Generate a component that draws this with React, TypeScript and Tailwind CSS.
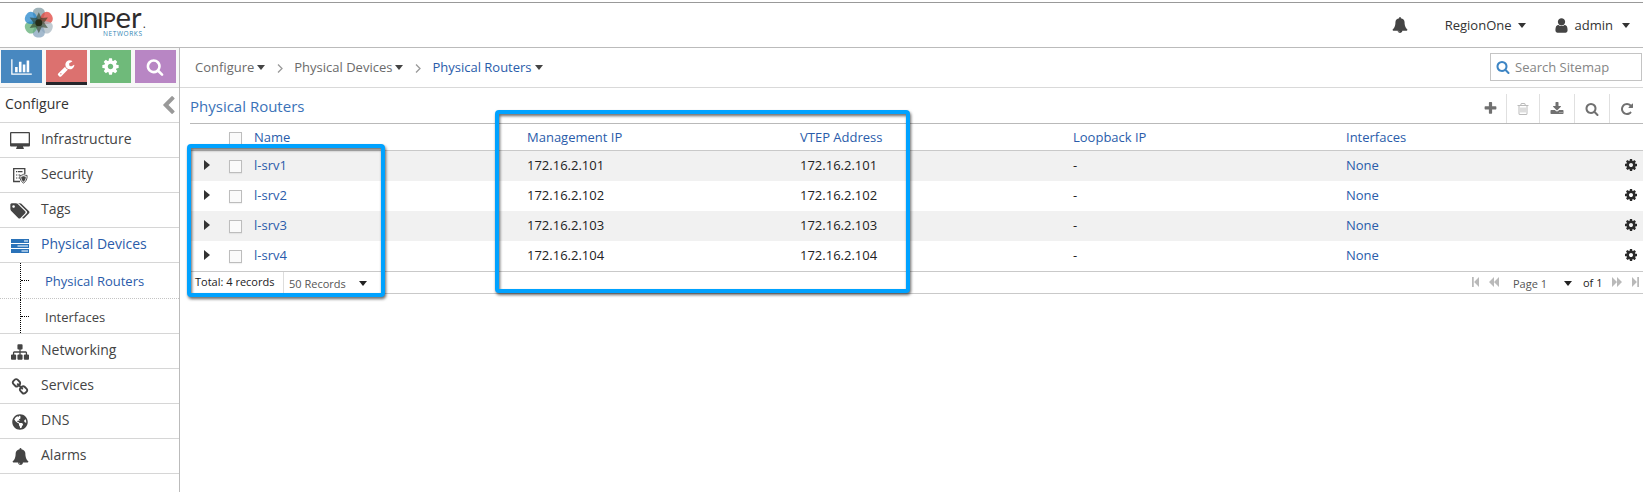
import React from "react";
import { FaGlobeAmericas } from "react-icons/fa";

const paths = {
  cog: "M1152 896q0-106-75-181t-181-75-181 75-75 181 75 181 181 75 181-75 75-181zm512-109v222q0 12-8 23t-20 13l-185 28q-19 54-39 91 35 50 107 138 10 12 10 25t-9 23q-27 37-99 108t-94 71q-12 0-26-9l-138-108q-44 23-91 38-16 136-29 186-7 28-36 28h-222q-14 0-24.5-8.5t-11.5-21.5l-28-184q-49-16-90-37l-141 107q-10 9-25 9-14 0-25-11-126-114-165-168-7-10-7-23 0-12 8-23 15-21 51-66.5t54-70.5q-27-50-41-99l-183-27q-13-2-21-12.5t-8-23.5v-222q0-12 8-23t19-13l186-28q14-46 39-92-40-57-107-138-10-12-10-24 0-10 9-23 26-36 98.5-107.5t94.500-71.500q13 0 26 10l138 107q44-23 91-38 16-136 29-186 7-28 36-28h222q14 0 24.500 8.500t11.500 21.500l28 184q49 16 90 37l142-107q9-9 24-9 13 0 25 10 129 119 165 170 7 8 7 22 0 12-8 23-15 21-51 66.500t-54 70.500q26 50 41 98l183 28q13 2 21 12.500t8 23.500z",
  wrench: "M448 1472q0-26-19-45t-45-19-45 19-19 45 19 45 45 19 45-19 19-45zm644-420l-682 682q-37 37-90 37-52 0-91-37l-106-108q-38-36-38-90 0-53 38-91l681-681q39 98 114.5 173.5t173.5 114.5zm634-435q0 39-23 106-47 134-164.5 217.5t-258.5 83.5q-185 0-316.5-131.5t-131.500-316.500 131.500-316.500 316.500-131.500q58 0 121.500 16.500t107.500 46.500q16 11 16 28t-16 28l-293 169v224l193 107q5-3 79-48.500t135.500-81 70.500-35.500q15 0 23.500 10t8.500 25z",
  search: "M1216 832q0-185-131.500-316.500t-316.500-131.500-316.500 131.500-131.500 316.500 131.500 316.500 316.500 131.500 316.500-131.500 131.500-316.500zm512 832q0 52-38 90t-90 38q-54 0-90-38l-343-342q-179 124-399 124-143 0-273.500-55.500t-225-150-150-225-55.500-273.500 55.500-273.500 150-225 225-150 273.500-55.500 273.500 55.500 225 150 150 225 55.500 273.500q0 220-124 399l343 343q37 37 37 90z",
  chart: "M640 896v512h-256v-512h256zm384-512v1024h-256v-1024h256zm1024 1152v128h-2048v-1536h128v1408h1920zm-640-896v768h-256v-768h256zm384-384v1152h-256v-1152h256z",
  sitemap: "M1792 1248v320q0 40-28 68t-68 28h-320q-40 0-68-28t-28-68v-320q0-40 28-68t68-28h96v-192h-512v192h96q40 0 68 28t28 68v320q0 40-28 68t-68 28h-320q-40 0-68-28t-28-68v-320q0-40 28-68t68-28h96v-192h-512v192h96q40 0 68 28t28 68v320q0 40-28 68t-68 28h-320q-40 0-68-28t-28-68v-320q0-40 28-68t68-28h96v-192q0-52 38-90t90-38h512v-192h-96q-40 0-68-28t-28-68v-320q0-40 28-68t68-28h320q40 0 68 28t28 68v320q0 40-28 68t-68 28h-96v192h512q52 0 90 38t38 90v192h96q40 0 68 28t28 68z",
  tags: "M448 448q0-53-37.5-90.5t-90.500-37.500-90.500 37.500-37.500 90.500 37.500 90.500 90.500 37.500 90.500-37.500 37.500-90.500zm1067 576q0 53-37 90l-491 492q-39 37-91 37-53 0-90-37l-715-716q-38-37-64.500-101t-26.500-117v-416q0-52 38-90t90-38h416q53 0 117 26.500t102 64.500l715 714q37 39 37 91zm384 0q0 53-37 90l-491 492q-39 37-91 37-36 0-59-14t-53-45l470-470q37-37 37-90 0-52-37-91l-715-714q-38-38-102-64.500t-117-26.500h224q53 0 117 26.500t102 64.500l715 714q37 39 37 91z",
  chain: "M1520 1216q0-40-28-68l-208-208q-28-28-68-28-42 0-72 32 3 3 19 18.500t21.500 21.500 15 19 13 25.500 3.500 27.500q0 40-28 68t-68 28q-15 0-27.500-3.500t-25.500-13-19-15-21.500-21.500-18.500-19q-33 31-33 73 0 40 28 68l206 207q27 27 68 27 40 0 68-26l147-146q28-28 28-67zm-703-705q0-40-28-68l-206-207q-28-28-68-28-39 0-68 27l-147 146q-28 28-28 67 0 40 28 68l208 208q27 27 68 27 42 0 72-31-3-3-19-18.500t-21.500-21.500-15-19-13-25.500-3.500-27.500q0-40 28-68t68-28q15 0 27.500 3.500t25.500 13 19 15 21.500 21.500 18.500 19q33-31 33-73zm895 705q0 120-85 203l-147 146q-83 83-203 83-121 0-204-85l-206-207q-83-83-83-203 0-123 88-209l-88-88q-86 88-208 88-120 0-204-84l-208-208q-84-84-84-204t85-203l147-146q83-83 203-83 121 0 204 85l206 207q83 83 83 203 0 123-88 209l88 88q86-88 208-88 120 0 204 84l208 208q84 84 84 204z",
  bell: "M912 1696q0-16-16-16-59 0-101.500-42.500t-42.500-101.500q0-16-16-16t-16 16q0 73 51.500 124.500t124.500 51.500q16 0 16-16zm816-288q0 52-38 90t-90 38h-448q0 106-75 181t-181 75-181-75-75-181h-448q-52 0-90-38t-38-90q50-42 91-88t85-119.500 74.500-158.500 50-206 19.500-260q0-152 117-282.500t307-158.500q-8-19-8-39 0-40 28-68t68-28 68 28 28 68q0 20-8 39 190 28 307 158.500t117 282.500q0 139 19.500 260t50 206 74.500 158.500 85 119.500 91 88z",
  user: "M1536 1399q0 109-62.500 187t-150.500 78h-854q-88 0-150.500-78t-62.500-187q0-85 8.500-160.500t31.500-152 58.500-131 94-89 134.500-34.500q131 128 313 128t313-128q76 0 134.500 34.500t94 89 58.500 131 31.500 152 8.500 160.500zm-256-887q0 159-112.500 271.500t-271.500 112.500-271.500-112.500-112.500-271.500 112.500-271.500 271.500-112.500 271.500 112.500 112.500 271.500z",
  plus: "M1600 736v192q0 40-28 68t-68 28h-416v416q0 40-28 68t-68 28h-192q-40 0-68-28t-28-68v-416h-416q-40 0-68-28t-28-68v-192q0-40 28-68t68-28h416v-416q0-40 28-68t68-28h192q40 0 68 28t28 68v416h416q40 0 68 28t28 68z",
  trash: "M704 736v576q0 14-9 23t-23 9h-64q-14 0-23-9t-9-23v-576q0-14 9-23t23-9h64q14 0 23 9t9 23zm256 0v576q0 14-9 23t-23 9h-64q-14 0-23-9t-9-23v-576q0-14 9-23t23-9h64q14 0 23 9t9 23zm256 0v576q0 14-9 23t-23 9h-64q-14 0-23-9t-9-23v-576q0-14 9-23t23-9h64q14 0 23 9t9 23zm128 724v-948h-896v948q0 22 7 40.500t14.500 27 10.500 8.500h832q3 0 10.500-8.500t14.500-27 7-40.500zm-672-1076h448l-48-117q-7-9-17-11h-317q-10 2-17 11zm928 32v64q0 14-9 23t-23 9h-96v948q0 83-47 143.500t-113 60.500h-832q-66 0-113-58.500t-47-141.500v-952h-96q-14 0-23-9t-9-23v-64q0-14 9-23t23-9h309l70-167q15-37 54-63t79-26h320q40 0 79 26t54 63l70 167h309q14 0 23 9t9 23z",
  download: "M1344 1344q0-26-19-45t-45-19-45 19-19 45 19 45 45 19 45-19 19-45zm256 0q0-26-19-45t-45-19-45 19-19 45 19 45 45 19 45-19 19-45zm128-224v320q0 40-28 68t-68 28h-1472q-40 0-68-28t-28-68v-320q0-40 28-68t68-28h465l135 136q58 56 136 56t136-56l136-136h464q40 0 68 28t28 68zm-325-569q17 41-14 70l-448 448q-18 19-45 19t-45-19l-448-448q-31-29-14-70 17-39 59-39h256v-448q0-26 19-45t45-19h256q26 0 45 19t19 45v448h256q42 0 59 39z",
  repeat: "M1664 256v448q0 26-19 45t-45 19h-448q-42 0-59-40-17-39 14-69l138-138q-148-137-349-137-104 0-198.500 40.500t-163.500 109.500-109.500 163.500-40.500 198.500 40.500 198.500 109.500 163.500 163.500 109.500 198.500 40.500q119 0 225-52t179-147q7-10 23-12 15 0 25 9l137 138q9 8 9.500 20.500t-7.500 22.500q-109 132-264 204.500t-327 72.500q-156 0-298-61t-245-164-164-245-61-298 61-298 164-245 245-164 298-61q147 0 284.500 55.500t244.500 156.500l130-129q29-31 70-14 39 17 39 59z",
  chevron: "M1427 301l-531 531 531 531q19 19 19 45t-19 45l-166 166q-19 19-45 19t-45-19l-742-742q-19-19-19-45t19-45l742-742q19-19 45-19t45 19l166 166q19 19 19 45t-19 45z",
};

function Icon({ name, className, box = "0 0 1792 1792" }: { name: keyof typeof paths; className: string; box?: string }) {
  return (
    <svg viewBox={box} fill="currentColor" className={`shrink-0 ${className}`}>
      <path d={paths[name]} />
    </svg>
  );
}

function Caret({ className = "" }: { className?: string }) {
  return (
    <svg viewBox="0 0 8 5" fill="currentColor" className={`h-[5px] w-2 shrink-0 ${className}`}>
      <path d="M0 0h8L4 5z" />
    </svg>
  );
}

function Logo() {
  const petals = [
    { a: 0, c: "#7f9aa3" },
    { a: 60, c: "#e0433c" },
    { a: 120, c: "#a9b8c2" },
    { a: 180, c: "#86a3bd" },
    { a: 240, c: "#5fae74" },
    { a: 300, c: "#2385cc" },
  ];
  return (
    <svg viewBox="0 -4 130 44" className="h-11 w-[130px] shrink-0 overflow-visible">
      {petals.map((p) => (
        <path key={p.a} d="M18.800 15.700C10.500 9 11 .800 18.800.800s8.300 8.200 0 14.900z" fill={p.c} fillOpacity="0.75" transform={`rotate(${p.a} 18.8 15.7)`} />
      ))}
      {petals.map((p) => (
        <path key={p.a} d="M18.800 15.700l-2.800-4.500 2.800-6 2.800 6z" fill="#2b3a22" fillOpacity="0.600" transform={`rotate(${p.a} 18.8 15.7)`} />
      ))}
      <circle cx="18.800" cy="15.700" r="3.500" fill="#262c18" />
      <g fill="#2e2b2c" className="font-['Lato']" fontWeight="400">
        <text x="41.200" y="21" fontSize="22">J</text>
        <text x="50" y="21" fontSize="22" textLength="14" lengthAdjust="spacingAndGlyphs">U</text>
        <text x="62.800" y="21" fontSize="29" textLength="15.500" lengthAdjust="spacingAndGlyphs">n</text>
        <text x="77.200" y="21" fontSize="22">I</text>
        <text x="82.500" y="21" fontSize="22">P</text>
        <text x="95.500" y="21" fontSize="29" textLength="15.500" lengthAdjust="spacingAndGlyphs">e</text>
        <text x="111" y="21" fontSize="29">r</text>
        <text x="123" y="21" fontSize="11">.</text>
      </g>
      <text x="83" y="29" fontSize="6.500" fill="#2f86b5" textLength="39" className="font-['Open_Sans']">NETWORKS</text>
    </svg>
  );
}

const tabs = [
  { bg: "bg-[#4888c0]", el: <Icon name="chart" box="0 0 2048 1792" className="h-[18px] w-[21px]" /> },
  { bg: "bg-[#dc716f] border-b-3 border-[#25252b]", el: <Icon name="wrench" className="mt-[3px] size-[18px]" /> },
  { bg: "bg-[#6fba7a]", el: <Icon name="cog" className="size-[19px]" /> },
  { bg: "bg-[#b886c4]", el: <Icon name="search" className="size-[18px]" /> },
];

function DesktopIcon() {
  return (
    <svg viewBox="0 0 20 17" className="h-[17px] w-5" fill="currentColor">
      <path fillRule="evenodd" d="M1.300 0h17.400c.8 0 1.300.5 1.300 1.300v11.900c0 .8-.5 1.300-1.300 1.300H13v1h.8V17H6.200v-1.500H7v-1H1.300c-.8 0-1.300-.5-1.300-1.300V1.300C0 .5.5 0 1.300 0zm0 1.300v9.900h17.400V1.300z" />
    </svg>
  );
}

function SecurityIcon() {
  return (
    <svg viewBox="0 0 15 16" className="h-4 w-[15px]" fill="none" stroke="currentColor">
      <path d="M7 13.500H.7V.700h11.100V6" strokeWidth="1.300" />
      <path d="M3 3.700h1.300M5 3.700h4.500M3 7h1.300M5.500 7H7M3 10h1.300M5.500 10H7" strokeWidth="1.200" />
      <path d="M10.500 6.300c1 .8 2.200 1.200 3.600 1.200.2 3.500-1 6-3.600 7.600-2.600-1.600-3.800-4.100-3.600-7.600 1.400 0 2.600-.4 3.600-1.200z" fill="#fff" strokeWidth=".9" />
      <path d="M10.500 8.200c.6.400 1.300.6 2 .7 0 2-.7 3.500-2 4.500-1.300-1-2-2.500-2-4.500.7-.1 1.400-.3 2-.7z" fill="currentColor" strokeWidth=".5" />
    </svg>
  );
}

function ServerIcon() {
  return (
    <svg viewBox="0 0 18 14" className="h-3.5 w-[18px]">
      <path d="M0 0h18v4H0zM0 5h18v4H0zM0 10h18v4H0z" fill="#2a72b8" />
      <path d="M13 1.300h4v1.400h-4zM6.500 6.300H17v1.400H6.500zM10.500 11.300H17v1.400h-6.500z" fill="#bcd6ee" />
    </svg>
  );
}

function NavRow({ icon, label, active = false }: { icon: React.ReactNode; label: string; active?: boolean }) {
  return (
    <div className={`flex h-[35px] items-center border-b border-[#d6d6d6] ${active ? "text-[#2a5caa]" : "text-[#444]"}`}>
      <div className="flex w-10 justify-center pt-px">{icon}</div>
      <div className="pl-px pb-0.5 leading-5">{label}</div>
    </div>
  );
}

function SubRow({ label, active = false }: { label: string; active?: boolean }) {
  return (
    <div className={`flex ${active ? "h-9 border-b border-dotted border-[#c4c4c4] text-[#2a5caa]" : "h-[35px] border-b border-[#d6d6d6] text-[#444]"}`}>
      <div className="w-[21px] border-r border-dotted border-r-black" />
      <div className="h-[18px] w-2 border-b border-dotted border-b-black" />
      <div className="pt-2 pl-4 text-[13px] leading-5">{label}</div>
    </div>
  );
}

function Crumb({ label, active = false }: { label: string; active?: boolean }) {
  return (
    <div className={`flex items-center gap-[3px] ${active ? "text-[#2a5caa]" : "text-[#6b6b6b]"}`}>
      <span>{label}</span>
      <Caret className="mt-px text-[#444]" />
    </div>
  );
}

function CrumbArrow() {
  return (
    <svg viewBox="0 0 6 9" className="mt-0.5 mr-[11px] ml-3 h-[9px] w-1.5" fill="none" stroke="#999" strokeWidth="1.300">
      <path d="M1 .5l4 4-4 4" />
    </svg>
  );
}

function CheckBox() {
  return <div className="size-[13px] border border-[#bdbdbd] bg-[#fafafa] shadow-[0_1px_1px_#0000000d]" />;
}

const rows = [1, 2, 3, 4];
const grid = "grid grid-cols-[39px_25px_273px_273px_273px_273px_1fr]";

function Pager({ d, w }: { d: string; w: string }) {
  return (
    <svg viewBox="0 0 10 9" preserveAspectRatio="none" className={`h-2.5 shrink-0 ${w}`} fill="#b9b9b9">
      <path d={d} />
    </svg>
  );
}

export default function App() {
  return (
    <div className="relative flex h-[492px] w-[1643px] flex-col overflow-hidden bg-white pt-0.5 font-['Open_Sans',sans-serif] text-sm leading-5 text-[#333]">
      <header className="flex h-[46px] items-center border-y border-t-[#999] border-b-[#bbb] pl-5">
        <Logo />
        <div className="ml-auto flex items-center text-[13px] leading-5">
          <Icon name="bell" className="size-4 text-[#444]" />
          <span className="ml-[37px]">RegionOne</span>
          <Caret className="ml-1.5" />
          <Icon name="user" className="ml-[27px] size-[17px] text-[#444]" />
          <span className="ml-[5px]">admin</span>
          <Caret className="mr-[13px] ml-[9px]" />
        </div>
      </header>
      <div className="flex flex-1">
        <aside className="w-[180px] border-r border-[#bbb]">
          <div className="flex h-10 gap-[3.500px] border-b border-[#d6d6d6] bg-[#f8f8f8] pt-0.5 pl-px text-white">
            {tabs.map((t, i) => (
              <div key={i} className={`flex w-[41px] items-center justify-center ${i === 1 ? "h-[35px]" : "h-[33px]"} ${t.bg}`}>{t.el}</div>
            ))}
          </div>
          <div className="flex h-[35px] items-center justify-between border-b border-[#d6d6d6] pr-1 pl-[5px]">
            <span className="pb-0.5 leading-5">Configure</span>
            <Icon name="chevron" box="410 20 1056 1624" className="h-[18px] w-[12px] text-[#999]" />
          </div>
          <NavRow icon={<DesktopIcon />} label="Infrastructure" />
          <NavRow icon={<SecurityIcon />} label="Security" />
          <NavRow icon={<Icon name="tags" box="0 0 1920 1792" className="h-[18px] w-5" />} label="Tags" />
          <NavRow icon={<ServerIcon />} label="Physical Devices" active />
          <SubRow label="Physical Routers" active />
          <SubRow label="Interfaces" />
          <NavRow icon={<Icon name="sitemap" className="size-[18px]" />} label="Networking" />
          <NavRow icon={<Icon name="chain" className="size-[18px]" />} label="Services" />
          <NavRow icon={<FaGlobeAmericas className="size-4" />} label="DNS" />
          <NavRow icon={<Icon name="bell" className="size-[17px]" />} label="Alarms" />
        </aside>
        <main className="flex-1">
          <div className="flex h-10 items-center border-b border-[#d9d9d9] pr-px pb-px pl-[15px] text-[13px] leading-5">
            <Crumb label="Configure" />
            <CrumbArrow />
            <Crumb label="Physical Devices" />
            <CrumbArrow />
            <Crumb label="Physical Routers" active />
            <div className="ml-auto flex h-7 w-[152px] items-center gap-[5px] border border-[#c4c4c4] pl-[5px] text-[#858585]">
              <Icon name="search" className="size-[14px] text-[#3d85c4]" />
              <span>Search Sitemap</span>
            </div>
          </div>
          <div className="ml-2.5">
            <div className="flex h-9 items-center justify-between border-b border-[#b9b9b9] text-[#3a72b8]">
              <span className="pt-px text-[15px] leading-5">Physical Routers</span>
              <div className="flex h-[29px] items-center self-end text-[#707070]">
                <div className="flex h-full w-[33px] items-center justify-center border-r border-[#e0e0e0]"><Icon name="plus" className="size-[15px]" /></div>
                <div className="flex h-full w-[33px] items-center justify-center border-r border-[#e0e0e0]"><Icon name="trash" className="size-[14px] text-[#bbb]" /></div>
                <div className="flex h-full w-[35px] items-center justify-center border-r border-[#e0e0e0]"><Icon name="download" className="size-[14px]" /></div>
                <div className="flex h-full w-[35px] items-center justify-center border-r border-[#e0e0e0]"><Icon name="search" className="size-[14px]" /></div>
                <div className="flex h-full w-[33px] items-center justify-center"><Icon name="repeat" className="size-[14px]" /></div>
              </div>
            </div>
            <div className={`${grid} h-[27px] items-center border-b border-[#c9c9c9] text-[13px] leading-5 text-[#2a5caa]`}>
              <span />
              <div className="pt-[3px]"><CheckBox /></div>
              <span>Name</span>
              <span>Management IP</span>
              <span>VTEP Address</span>
              <span>Loopback IP</span>
              <span>Interfaces</span>
            </div>
            {rows.map((n) => (
              <div key={n} className={`${grid} h-[30px] items-center pb-0.5 text-[13px] leading-5 text-[#222] ${n % 2 ? "bg-[#f1f1f1]" : "bg-white"}`}>
                <svg viewBox="0 0 6 10" className="ml-3.5 h-2.5 w-1.5" fill="#333"><path d="M0 0l6 5-6 5z" /></svg>
                <div className="pt-[3px]"><CheckBox /></div>
                <span className="text-[#2a5caa]">l-srv{n}</span>
                <span>172.16.2.10{n}</span>
                <span>172.16.2.10{n}</span>
                <span>-</span>
                <div className="flex items-center justify-between pr-[5px]">
                  <span className="text-[#2a5caa]">None</span>
                  <Icon name="cog" className="size-[14px] text-[#2a2a2a]" />
                </div>
              </div>
            ))}
            <div className="flex h-[23px] items-center border-y border-[#c9c9c9] text-[11px] leading-4 text-[#222]">
              <span className="w-[93px] pb-0.5 pl-[5px]">Total: 4 records</span>
              <div className="flex h-full items-center border-l border-[#ddd] pt-0.5 pl-[5px] text-[#555]">
                <span>50 Records</span>
                <Caret className="ml-[13px] text-[#222]" />
              </div>
              <div className="ml-auto flex items-center pr-1">
                <Pager w="mb-px w-[7px]" d="M0 0h2.500v9H0zM10 0v9L3 4.500z" />
                <Pager w="mb-px ml-2.5 w-2.5" d="M5 0v9L0 4.500zM10 0v9L5 4.500z" />
                <span className="ml-3.5 w-[51px] pt-0.5 text-[#555]">Page 1</span>
                <Caret className="mt-0.5" />
                <span className="ml-[11px] w-[29px]">of 1</span>
                <Pager w="mb-px w-2.5" d="M0 0v9l5-4.500zM5 0v9l5-4.500z" />
                <Pager w="mb-px ml-2.5 w-[7px]" d="M7.500 0H10v9H7.500zM0 0v9l7-4.500z" />
              </div>
            </div>
          </div>
        </main>
      </div>
      <div className="absolute top-36 left-[187px] h-[153px] w-[198px] rounded-[4px] border-4 border-[#00a2ff] drop-shadow-[1px_2px_1.500px_#00000099]" />
      <div className="absolute top-[110px] left-[495px] h-[183px] w-[415px] rounded-[4px] border-4 border-[#00a2ff] drop-shadow-[1px_2px_1.500px_#00000099]" />
    </div>
  );
}
